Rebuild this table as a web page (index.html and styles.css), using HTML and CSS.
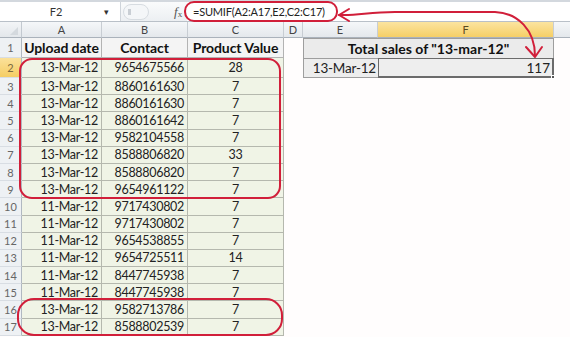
FILE: index.html
```html
<!DOCTYPE html>
<html>
<head>
<meta charset="utf-8">
<link rel="stylesheet" href="styles.css">
</head>
<body>
<div class="app">
  <div class="fbar">
    <div class="namebox"><span class="ref">F2</span><span class="dd">&#9662;</span></div>
    <div class="btns"><span class="pill"><span class="dot"></span></span></div>
    <div class="fx"><span class="f">f</span><span class="x">x</span></div>
    <div class="formula">=SUMIF(A2:A17,E2,C2:C17)</div>
  </div>
  <div class="sheet">
    <div class="corner"><span class="tri"></span></div>
    <div class="ch">A</div><div class="ch">B</div><div class="ch">C</div><div class="ch">D</div><div class="ch">E</div><div class="ch sel">F</div><div class="ch last"></div>

    <div class="rn">1</div>
    <div class="hd">Upload date</div><div class="hd">Contact</div><div class="hd">Product Value</div>
    <div class="blank"></div><div class="title">Total sales of "13-mar-12"</div><div class="blank"></div>

    <div class="rn sel">2</div>
    <div class="d r">13-Mar-12</div><div class="d r">9654675566</div><div class="d c">28</div>
    <div class="blank"></div><div class="e2">13-Mar-12</div><div class="f2">117<span class="handle"></span></div><div class="blank"></div>

    <div class="rn">3</div><div class="d r">13-Mar-12</div><div class="d r">8860161630</div><div class="d c">7</div><div class="rest"></div>
    <div class="rn">4</div><div class="d r">13-Mar-12</div><div class="d r">8860161630</div><div class="d c">7</div><div class="rest"></div>
    <div class="rn">5</div><div class="d r">13-Mar-12</div><div class="d r">8860161642</div><div class="d c">7</div><div class="rest"></div>
    <div class="rn">6</div><div class="d r">13-Mar-12</div><div class="d r">9582104558</div><div class="d c">7</div><div class="rest"></div>
    <div class="rn">7</div><div class="d r">13-Mar-12</div><div class="d r">8588806820</div><div class="d c">33</div><div class="rest"></div>
    <div class="rn">8</div><div class="d r">13-Mar-12</div><div class="d r">8588806820</div><div class="d c">7</div><div class="rest"></div>
    <div class="rn">9</div><div class="d r">13-Mar-12</div><div class="d r">9654961122</div><div class="d c">7</div><div class="rest"></div>
    <div class="rn">10</div><div class="d r">11-Mar-12</div><div class="d r">9717430802</div><div class="d c">7</div><div class="rest"></div>
    <div class="rn">11</div><div class="d r">11-Mar-12</div><div class="d r">9717430802</div><div class="d c">7</div><div class="rest"></div>
    <div class="rn">12</div><div class="d r">11-Mar-12</div><div class="d r">9654538855</div><div class="d c">7</div><div class="rest"></div>
    <div class="rn">13</div><div class="d r">11-Mar-12</div><div class="d r">9654725511</div><div class="d c">14</div><div class="rest"></div>
    <div class="rn">14</div><div class="d r">11-Mar-12</div><div class="d r">8447745938</div><div class="d c">7</div><div class="rest"></div>
    <div class="rn">15</div><div class="d r">11-Mar-12</div><div class="d r">8447745938</div><div class="d c">7</div><div class="rest"></div>
    <div class="rn">16</div><div class="d r">13-Mar-12</div><div class="d r">9582713786</div><div class="d c">7</div><div class="rest"></div>
    <div class="rn">17</div><div class="d r">13-Mar-12</div><div class="d r">8588802539</div><div class="d c">7</div><div class="rest"></div>
  </div>
  <svg class="marks" width="570" height="337" viewBox="0 0 570 337">
    <g fill="none" stroke="#d11f3a" stroke-width="2" stroke-linecap="round" stroke-linejoin="round">
      <rect x="185" y="2" width="152" height="19" rx="9"/>
      <rect x="20" y="59" width="260" height="139" rx="12"/>
      <rect x="18" y="299" width="264" height="36" rx="16"/>
      <path d="M339 15 C358 16 368 12 395 12 L495 12 C518 13 535 30 535 56"/>
      <path d="M349 9 L339 15 L349 21"/>
      <path d="M526 47 L535 57 L542 47"/>
    </g>
  </svg>
</div>
</body>
</html>
```
FILE: styles.css
```css
* { box-sizing: border-box; }
html, body { margin: 0; padding: 0; background: #fffdfd; }
body { width: 570px; height: 337px; overflow: hidden; font-family: Lato, "Open Sans", sans-serif; color: #222; }

.app { position: relative; width: 570px; height: 337px; }

.fbar {
  display: flex;
  height: 22px;
  border-top: 2px solid #d3d8de;
  border-bottom: 1px solid #b9c0c8;
  background: #fff;
}
.namebox {
  width: 121px;
  display: flex;
  align-items: center;
  border-right: 1px solid #cfd4da;
  position: relative;
}
.ref { flex: 1; text-align: center; font-size: 11px; color: #333; padding-left: 8px; }
.dd { width: 16px; font-size: 9px; color: #333; }
.btns {
  width: 53px;
  display: flex;
  align-items: center;
  padding-left: 2px;
  background: linear-gradient(#fafbfc, #eceff2);
}
.pill {
  width: 26px; height: 16px;
  border: 1px solid #d7dce1;
  border-radius: 8px;
  background: #f4f6f8;
  display: flex; align-items: center; padding-left: 4px;
}
.dot { width: 4px; height: 6px; border-left: 3px solid #c9ced4; }
.fx {
  width: 13px;
  display: flex; align-items: center;
  font-family: "Liberation Serif", serif;
  color: #555;
  background: linear-gradient(#fafbfc, #eceff2);
}
.fx .f { font-style: italic; font-size: 13px; }
.fx .x { font-size: 9px; margin-top: 5px; }
.formula {
  flex: 1;
  display: flex; align-items: center;
  padding-left: 6px;
  font-size: 11px;
  letter-spacing: -0.2px;
  color: #222;
}

.sheet {
  display: grid;
  grid-template-columns: 22px 80px 86px 96px 19px 75px 176px 1fr;
  grid-template-rows: 16px 20px 20px repeat(15, 17.2px);
}
.sheet > div { display: flex; align-items: center; overflow: hidden; white-space: nowrap; }

.corner {
  background: linear-gradient(#f3f5f7, #e3e7eb);
  border-right: 1px solid #c3c9d0;
  border-bottom: 1px solid #aab2bb;
  position: relative;
}
.tri {
  position: absolute; right: 3px; bottom: 2px;
  width: 0; height: 0;
  border-left: 8px solid transparent;
  border-bottom: 8px solid #d4d9de;
}
.ch {
  justify-content: center;
  font-size: 11px;
  color: #444;
  background: linear-gradient(#f5f7f9, #e4e8ec);
  border-right: 1px solid #c8cdd3;
  border-bottom: 1px solid #aab2bb;
}
.ch.sel { background: linear-gradient(#fbe4a0, #f6cf66); color: #5a4a20; }
.ch.last { border-right: none; }

.rn {
  justify-content: center;
  font-size: 11px;
  color: #666;
  background: #eef1f4;
  border-right: 1px solid #b0b8c1;
  border-bottom: 1px solid #d8dde3;
}
.rn.sel { background: linear-gradient(#fbe19a, #f5cd64); color: #7a6a40; }

.hd {
  justify-content: center;
  font-weight: bold;
  font-size: 14px;
  letter-spacing: -0.1px;
  color: #111;
  background: #f4f4f4;
  border-right: 1px solid #b3b3b3;
  border-bottom: 1px solid #b3b3b3;
}
.d {
  font-size: 12.5px;
  letter-spacing: -0.3px;
  background: #f0f4e6;
  border-right: 1px solid #b5b8ae;
  border-bottom: 1px solid #b5b8ae;
}
.d.r { justify-content: flex-end; padding-right: 3px; }
.d.c { justify-content: center; }

.blank { background: #fffdfd; }
.rest { grid-column: span 4; background: #fffdfd; }

.title {
  grid-column: span 2;
  justify-content: center;
  font-weight: bold;
  font-size: 14px;
  color: #111;
  background: #ebebeb;
  border: 1px solid #9e9e9e;
  border-bottom: none;
}
.e2 {
  justify-content: flex-end;
  padding-right: 2px;
  font-size: 13.5px;
  letter-spacing: -0.2px;
  background: #ededed;
  border-left: 1px solid #9e9e9e;
  border-top: 1px solid #9e9e9e;
  border-bottom: 1px solid #9e9e9e;
}
.f2 {
  position: relative;
  justify-content: flex-end;
  padding-right: 2px;
  font-size: 13.5px;
  background: #eeeeee;
  border: 2px solid #6b6b6b;
  border-top-width: 1px;
  border-left-width: 1px;
  overflow: visible !important;
}
.handle {
  position: absolute; right: -3px; bottom: -3px;
  width: 4px; height: 4px; background: #555; border: 1px solid #fff;
}

.marks { position: absolute; left: 0; top: 0; pointer-events: none; }
```
